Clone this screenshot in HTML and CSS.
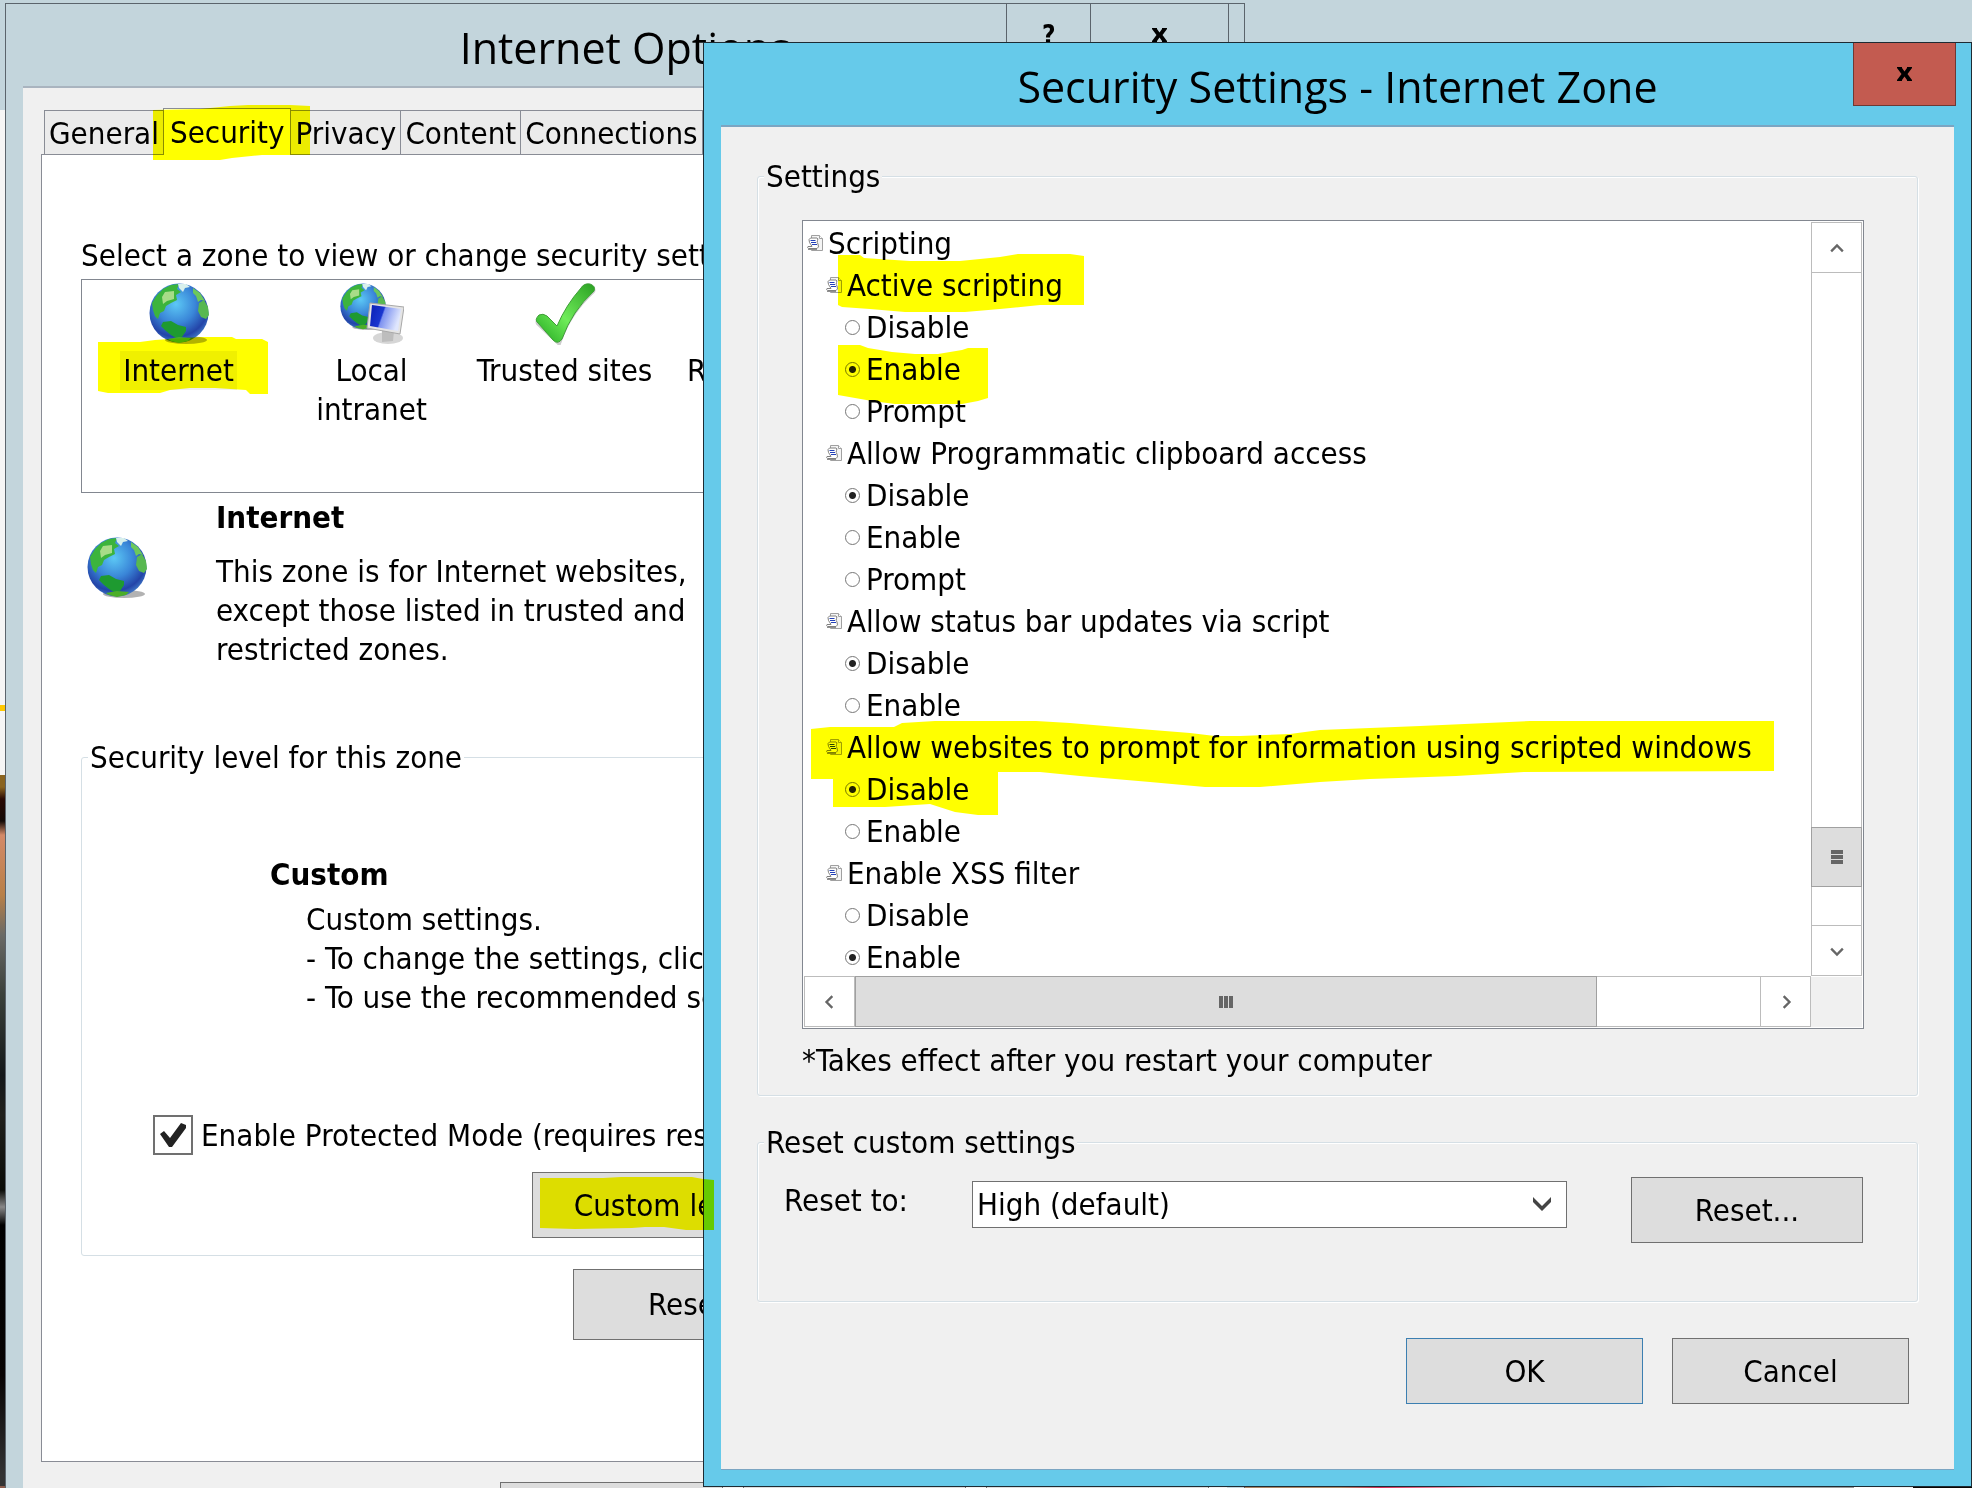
FILE: index.html
```html
<!DOCTYPE html>
<html lang="en">
<head>
    <meta charset="UTF-8">
    <meta name="viewport" content="width=device-width, initial-scale=1.0">
    <title>Internet Options</title>

    <link rel="stylesheet" href="styles.css">
</head>
<body>
    <!-- shared icons -->
    <svg class="defs" aria-hidden="true">
        <defs>
            <radialGradient id="ocean" cx="0.45" cy="0.35" r="0.65">
                <stop offset="0" stop-color="#5cc8f5"/>
                <stop offset="0.5" stop-color="#3a86d8"/>
                <stop offset="0.85" stop-color="#2344a8"/>
                <stop offset="1" stop-color="#3d74c4"/>
            </radialGradient>
            <linearGradient id="screen" x1="0" x2="1" y1="0" y2="0.3">
                <stop offset="0" stop-color="#0a1fb4"/>
                <stop offset="0.45" stop-color="#1a36d0"/>
                <stop offset="0.5" stop-color="#7d92f0"/>
                <stop offset="1" stop-color="#dfe6fd"/>
            </linearGradient>
            <linearGradient id="tick" x1="0" x2="1" y1="1" y2="0">
                <stop offset="0" stop-color="#1fa51c"/>
                <stop offset="0.45" stop-color="#6fec5a"/>
                <stop offset="1" stop-color="#2aa022"/>
            </linearGradient>
            <symbol id="globe" viewBox="0 0 60 62">
                <ellipse cx="37" cy="57" rx="21" ry="4" fill="#000" opacity="0.3"/>
                <circle cx="30" cy="30" r="29.5" fill="url(#ocean)"/>
                <path d="M14 6 L22 2 L30 1 L28 6 L32 9 L27 12 L28 17 L22 20 L17 23 L15 28 L11 30 L9 36 L6 33 L4 27 L3 20 L8 12 Z" fill="#3cb43c"/>
                <path d="M16 9 L25 8 L25 16 L18 18 L14 21 L13 14 Z" fill="#a8dc88"/>
                <path d="M29 1 L37 1 L41 4 L36 5 L34 9 L30 5 Z" fill="#d8f0ec"/>
                <path d="M44 5 L51 10 L56 18 L52 17 L49 19 L47 13 L44 10 Z" fill="#6cc85c"/>
                <path d="M50 20 L55 17 L59 24 L60 32 L57 36 L52 34 L49 28 Z" fill="#58b850"/>
                <path d="M14 39 L22 38 L29 42 L37 44 L37 48 L33 54 L27 55 L22 52 L17 48 L12 43 Z" fill="#1e9a30"/>
                <path d="M19 56 L30 54 L42 55 L39 58 L30 60 L22 58 Z" fill="#4cae28"/>
            </symbol>
            <symbol id="script" viewBox="0 0 16 16">
                <path d="M4.5 0.5 H12.5 L15.5 3.5 V15.5 H4.5 Z" fill="#f4f4f4" stroke="#a0a0a0"/>
                <path d="M12.5 0.5 V3.5 H15.5" fill="#fff" stroke="#a0a0a0"/>
                <path d="M3.5 3 H10 Q11.5 3.5 10.5 5.500 Q9.500 7.500 11 9 Q12.500 12.500 10 13.500 H1.500 Q0 13 1 11.500 H5 Q3.500 9 2.500 7.500 Q1 4 3.500 3 Z" fill="#fff" stroke="#808080"/>
                <path d="M3.5 5.500 H8.500 M4 7.500 H9 M5 9.500 H10" stroke="#2440b8"/>
                <path d="M1 14.500 H10" stroke="#909090"/>
            </symbol>
            <symbol id="glyph-x" viewBox="0 0 17 14">
                <path d="M1 0 H6 V1 L8.500 4.500 L11 1 V0 H16 V1 L11.500 7 L16 13 V14 H11 V13 L8.500 9.500 L6 13 V14 H1 V13 L5.500 7 L1 1 Z"/>
            </symbol>
            <symbol id="chevron" viewBox="0 0 12 12">
                <path d="M1 4 L6 9 L11 4" fill="none" stroke="#666" stroke-width="2"/>
            </symbol>
        </defs>
    </svg>

    <div class="desktop">
        <section class="window options">
            <header class="titlebar">
                <h1>Internet Options</h1>
                <div class="window-buttons">
                    <button class="help" type="button">?</button>
                    <button class="close" type="button" aria-label="Close"><svg width="17" height="14"><use href="#glyph-x"/></svg></button>
                </div>
            </header>
            <div class="client">
                <nav class="tabs">
                    <button type="button">General</button>
                    <button type="button" class="active">Security</button>
                    <button type="button">Privacy</button>
                    <button type="button">Content</button>
                    <button type="button">Connections</button>
                    <button type="button">Programs</button>
                </nav>
                <div class="panel">
                    <p>Select a zone to view or change security settings.</p>
                    <ul class="zones">
                        <li class="selected">
                            <svg width="60" height="62"><use href="#globe"/></svg>
                            <span>Internet</span>
                        </li>
                        <li>
                            <svg width="64" height="62" viewBox="0 0 64 62">
                                <use href="#globe" width="46" height="48"/>
                                <ellipse cx="48" cy="55" rx="15" ry="6" fill="#d6d6d6"/>
                                <path d="M42 46 L54 48 L53 58 L42 59 Z" fill="#bdbdbd"/>
                                <path d="M30 20 L64 24 L60 51 L27 45 Z" fill="#e4e4e4" stroke="#a8a8a8"/>
                                <path d="M32 22 L61 26 L58 48 L30 43 Z" fill="url(#screen)"/>
                            </svg>
                            <span>Local intranet</span>
                        </li>
                        <li>
                            <svg width="62" height="62" viewBox="0 0 62 62">
                                <path d="M6 39 L24 56 Q34 28 57 7" fill="none" stroke="#000" stroke-opacity="0.2" stroke-width="9" stroke-linecap="round"/>
                                <path d="M5 32 Q0 37 4 40 L19 57 Q24 62 28 56 Q38 28 60 8 Q62 3 56 1 Q50 0 47 5 Q32 22 23 43 L13 33 Q9 30 5 32 Z" fill="url(#tick)" stroke="#3f9e38"/>
                            </svg>
                            <span>Trusted sites</span>
                        </li>
                        <li>
                            <svg width="62" height="62" viewBox="0 0 62 62">
                                <circle cx="31" cy="31" r="25" fill="none" stroke="#d22b2b" stroke-width="9"/>
                                <path d="M14 14 L48 48" stroke="#d22b2b" stroke-width="9"/>
                            </svg>
                            <span>Restricted sites</span>
                        </li>
                    </ul>
                    <div class="zone-info">
                        <svg width="60" height="62"><use href="#globe"/></svg>
                        <div>
                            <h2>Internet</h2>
                            <p>This zone is for Internet websites, except those listed in trusted and restricted zones.</p>
                        </div>
                    </div>
                    <fieldset class="level">
                        <legend>Security level for this zone</legend>
                        <div class="level-body">
                            <h2>Custom</h2>
                            <ul class="hints">
                                <li>Custom settings.</li>
                                <li>- To change the settings, click Custom level.</li>
                                <li>- To use the recommended settings, click Default level.</li>
                            </ul>
                            <label class="check">
                                <input type="checkbox" checked>
                                <svg width="30" height="30" viewBox="0 0 30 30"><path d="M2 14 L6 11 L12 18 L23 3 L28 5 L28 8 L14 27 L11 27 Z" fill="#222"/></svg>
                                Enable Protected Mode (requires restarting Internet Explorer)
                            </label>
                            <div class="level-buttons">
                                <button type="button">Custom level...</button>
                                <button type="button">Default level</button>
                            </div>
                        </div>
                    </fieldset>
                    <div class="reset-all">
                        <button type="button">Reset all zones to default level</button>
                    </div>
                </div>
                <div class="options-actions">
                    <button type="button" aria-label="OK"></button>
                    <button type="button" aria-label="Cancel"></button>
                    <button type="button" aria-label="Apply"></button>
                </div>
            </div>
        </section>

        <section class="window settings">
            <header class="titlebar">
                <h1>Security Settings - Internet Zone</h1>
                <div class="window-buttons">
                    <button class="close" type="button" aria-label="Close"><svg width="17" height="14"><use href="#glyph-x"/></svg></button>
                </div>
            </header>
            <div class="client">
                <fieldset>
                    <legend>Settings</legend>
                    <div class="settings-body">
                        <div class="listbox">
                            <ul class="tree">
                                <li class="root"><svg width="16" height="16"><use href="#script"/></svg>Scripting</li>
                                <li class="item"><svg width="16" height="16"><use href="#script"/></svg>Active scripting</li>
                                <li class="choice"><label><input type="radio" name="active">Disable</label></li>
                                <li class="choice"><label><input type="radio" name="active" checked>Enable</label></li>
                                <li class="choice"><label><input type="radio" name="active">Prompt</label></li>
                                <li class="item"><svg width="16" height="16"><use href="#script"/></svg>Allow Programmatic clipboard access</li>
                                <li class="choice"><label><input type="radio" name="clipboard" checked>Disable</label></li>
                                <li class="choice"><label><input type="radio" name="clipboard">Enable</label></li>
                                <li class="choice"><label><input type="radio" name="clipboard">Prompt</label></li>
                                <li class="item"><svg width="16" height="16"><use href="#script"/></svg>Allow status bar updates via script</li>
                                <li class="choice"><label><input type="radio" name="statusbar" checked>Disable</label></li>
                                <li class="choice"><label><input type="radio" name="statusbar">Enable</label></li>
                                <li class="item"><svg width="16" height="16"><use href="#script"/></svg>Allow websites to prompt for information using scripted windows</li>
                                <li class="choice"><label><input type="radio" name="prompt" checked>Disable</label></li>
                                <li class="choice"><label><input type="radio" name="prompt">Enable</label></li>
                                <li class="item"><svg width="16" height="16"><use href="#script"/></svg>Enable XSS filter</li>
                                <li class="choice"><label><input type="radio" name="xss">Disable</label></li>
                                <li class="choice"><label><input type="radio" name="xss" checked>Enable</label></li>
                            </ul>
                            <div class="scroll vertical">
                                <button type="button" aria-label="Scroll up"><svg class="up" width="14" height="14"><use href="#chevron"/></svg></button>
                                <div class="track"></div>
                                <div class="thumb"><i></i><i></i><i></i></div>
                                <div class="track-end"></div>
                                <button type="button" aria-label="Scroll down"><svg width="14" height="14"><use href="#chevron"/></svg></button>
                            </div>
                            <div class="scroll horizontal">
                                <button type="button" aria-label="Scroll left"><svg class="left" width="14" height="14"><use href="#chevron"/></svg></button>
                                <div class="thumb"><i></i><i></i><i></i></div>
                                <div class="track"></div>
                                <button type="button" aria-label="Scroll right"><svg class="right" width="14" height="14"><use href="#chevron"/></svg></button>
                            </div>
                            <div class="corner"></div>
                        </div>
                        <p class="note">*Takes effect after you restart your computer</p>
                    </div>
                </fieldset>
                <fieldset>
                    <legend>Reset custom settings</legend>
                    <div class="reset-body">
                        <label for="reset-to">Reset to:</label>
                        <div class="select">
                            <select id="reset-to">
                                <option>High (default)</option>
                                <option>Medium-high</option>
                                <option>Medium</option>
                            </select>
                            <svg width="18" height="14" viewBox="0 0 18 14"><path d="M0 0 L9 9 L18 0 V5 L9 14 L0 5 Z" fill="#444"/></svg>
                        </div>
                        <button type="button">Reset...</button>
                    </div>
                </fieldset>
                <div class="actions">
                    <button type="button" class="default">OK</button>
                    <button type="button">Cancel</button>
                </div>
            </div>
        </section>

        <!-- marker pen strokes, drawn over both windows -->
        <svg class="marker" aria-hidden="true" width="1972" height="1488">
            <path d="M153 110 L200 109 L230 106 L248 105 H290 L310 106 V155 H262 L232 158 L220 160 H153 Z"/>
            <path d="M98 342 H140 L155 340 L200 337 H232 L236 339 H262 L268 342 V394 H250 L246 390 L215 388 H190 L170 390 L160 393 H108 L98 391 Z"/>
            <path d="M540 1178 H603 L621 1177 H692 L703 1179 L714 1180 V1230 H686 L664 1227 H645 L632 1228 L575 1229 L540 1228 Z"/>
            <path d="M838 255 H860 L864 258 L910 261 H960 L1000 257 L1018 254 H1070 L1084 256 V305 H1040 L1000 309 L965 312 H905 L870 309 L842 307 L838 305 Z"/>
            <path d="M838 345 H860 L868 348 L892 352 L915 354 H938 L962 350 L968 348 H988 V398 L978 401 L962 404 H895 L872 401 L838 395 Z"/>
            <path d="M811 729 L830 727 H894 L902 723 L935 721 H1036 L1070 723 L1140 729 L1190 733 L1215 736 H1240 L1290 734 L1320 730 L1420 726 L1530 721 H1774 V771 L1524 772 L1456 776 L1370 779 L1320 782 L1260 787 H1205 L1150 782 L1080 776 L1040 772 H998 V815 H978 L955 812 L930 804 L915 805 L885 807 H833 V779 H811 Z"/>
        </svg>
    </div>
</body>
</html>
```
FILE: styles.css
```css
* {
    box-sizing: border-box;
}

body {
    margin: 0;
    font-family: "DejaVu Sans Condensed", "Noto Sans", sans-serif;
    font-size: 31px;
    line-height: 39px;
    color: #000;
}

h1, h2, p, ul {
    margin: 0;
    padding: 0;
    font-size: inherit;
}

ul {
    list-style: none;
}

svg {
    display: block;
    flex-shrink: 0;
}

.defs {
    position: absolute;
    width: 0;
    height: 0;
}

button {
    padding: 0;
    font: inherit;
    color: inherit;
    white-space: nowrap;
    background: #ddd;
    border: 1px solid #707070;
    border-radius: 0;
}

.desktop {
    position: relative;
    height: 100vh;
    overflow: hidden;
    background:
        linear-gradient(90deg, #8a5a4a 0, #b08a68 68%, #d6305a 70%, #f0a0b0 74%, #dde0ea 76%, #a8b4d0 83%, #eee 85%, #a8a8a8 90%, #999 94%, #fff 94%, #f0f0f0 97%, #0a0604 97%) right bottom / 100% 2px no-repeat,
        linear-gradient(#8a6420 0, #8a6420 12px, #2a0a04 24px, #140a06 46px, #d48a68 60px, #b88048 120px, #6a6a66 160px, #3a403a 220px, #14181a 300px, #20201c 340px, #0a0c08 415px, #888 432px, #000 450px, #080404 600px, #333 700px) 0 775px / 6px 100% no-repeat,
        linear-gradient(#ffc800, #ffc800) 0 705px / 6px 6px no-repeat,
        linear-gradient(#c3d5dc, #c3d5dc) 0 0 / 100% 110px no-repeat,
        #f5f5f5;
}

/* windows */
.window {
    position: absolute;
    border: 1px solid #5b646c;
}

.options {
    top: 3px;
    left: 5px;
    width: 62.9%;
    background: #c3d5dc;
}

.settings {
    top: 42px;
    left: 703px;
    right: 0;
    background: #66caea;
    border-color: #1d2b33;
}

.titlebar {
    display: grid;
    grid-template-columns: 1fr auto 1fr;
    height: 84px;
    padding: 0 15px;
}

.titlebar h1 {
    grid-column: 2;
    font-family: "Open Sans", sans-serif;
    font-size: 43px;
    font-weight: 400;
    line-height: 87px;
}

.window-buttons {
    display: flex;
    justify-self: end;
    height: 63px;
}

.window-buttons button {
    display: flex;
    align-items: center;
    justify-content: center;
    width: 139px;
    background: none;
    border-color: #5b646c;
    border-width: 0 1px 1px;
}

.window-buttons .help {
    width: 84px;
    border-right: 0;
    font-size: 26px;
    font-weight: bold;
}

.settings .window-buttons .close {
    width: 103px;
    background: #c35b50;
    border-color: #6e3934;
}

.client {
    margin: 0 17px 17px;
    padding: 30px 36px 65px;
    background: #f0f0f0;
    box-shadow: 0 -2px 0 #7ba5c2, 0 1px 0 #7ba5c2;
}

fieldset {
    min-width: 0;
    margin: 0;
    padding: 0 6px;
    border: 1px solid #d5dfe5;
    border-radius: 3px;
    box-shadow: 1px 1px 0 #fff, inset 1px 1px 0 #fff;
}

legend {
    padding: 0 2px;
    background: #f0f0f0;
}

/* Internet Options */
.options .client {
    padding: 20px 18px 60px;
    box-shadow: 0 -2px 0 #a9b4bf;
}

.tabs {
    display: flex;
    align-items: flex-end;
    padding-left: 3px;
}

.tabs button {
    height: 45px;
    margin-bottom: -1px;
    padding: 2px 4px 0;
    background: #ebebeb;
    border-color: #898c95;
    border-right-width: 0;
}

.tabs .active {
    position: relative;
    height: 47px;
    padding: 0 6px;
    background: #fff;
    border-bottom: 0;
    border-right-width: 1px;
}

.tabs .active + button {
    border-left: 0;
}

.panel {
    padding: 81px 39px 121px;
    background: #fff;
    border: 1px solid #898c95;
}

.zones {
    display: flex;
    height: 214px;
    margin-top: 4px;
    padding-top: 3px;
    border: 1px solid #828790;
}

.zones li {
    display: flex;
    flex-direction: column;
    align-items: center;
    gap: 6px;
    width: 193px;
    text-align: center;
}

.zones span {
    max-width: 190px;
    padding: 0 3px;
}

.zones li:nth-child(even) span {
    max-width: 150px;
}

.zones .selected span {
    background: #f0f0f0;
}

.zone-info {
    display: flex;
    gap: 69px;
    margin-top: 5px;
    padding-left: 6px;
}

.zone-info svg {
    margin-top: 39px;
}

.zone-info p {
    max-width: 500px;
    margin-top: 15px;
}

.level {
    margin-top: 69px;
}

.level legend {
    background: #fff;
}

.level-body {
    padding: 78px 0 17px 65px;
}

.level-body h2 {
    padding-left: 117px;
}

.hints {
    margin-top: 6px;
    padding-left: 153px;
    white-space: nowrap;
}

.check {
    display: flex;
    align-items: center;
    gap: 8px;
    position: relative;
    margin-top: 98px;
    white-space: nowrap;
}

.check input {
    appearance: none;
    width: 40px;
    height: 40px;
    margin: 0;
    background: #fff;
    border: 2px solid #707070;
}

.check svg {
    position: absolute;
    left: 5px;
    top: 5px;
}

.level-buttons {
    display: flex;
    gap: 20px;
    margin-top: 17px;
    padding-left: 379px;
}

.level-buttons button {
    width: 292px;
    height: 66px;
}

.reset-all {
    display: flex;
    margin-top: 13px;
    padding: 0 18px 0 492px;
}

.reset-all button {
    flex: 1;
    height: 71px;
}

.options-actions {
    display: flex;
    justify-content: flex-end;
    gap: 20px;
    margin-top: 20px;
}

.options-actions button {
    width: 223px;
    height: 66px;
}

/* Security Settings */
.settings-body {
    padding: 24px 47px 15px 38px;
}

.listbox {
    display: grid;
    grid-template-columns: 1fr 51px;
    grid-template-rows: auto 50px;
    padding: 0 1px 1px;
    background: #fff;
    border: 1px solid #828790;
}

.tree li {
    display: flex;
    align-items: center;
    height: 42px;
    padding-top: 2px;
    padding-left: 22px;
    white-space: nowrap;
}

.tree svg {
    margin-right: 5px;
}

.tree .root {
    padding-left: 3px;
}

.tree .choice {
    padding-left: 41px;
}

.choice label {
    display: flex;
    align-items: center;
    gap: 6px;
}

.choice input {
    appearance: none;
    width: 15px;
    height: 15px;
    margin: 0;
    border: 1px solid #777;
    border-radius: 50%;
}

.choice input:checked {
    background: radial-gradient(circle, #222 3px, transparent 4px);
}

.scroll {
    display: flex;
    background: #fff;
}

.scroll button {
    display: flex;
    align-items: center;
    justify-content: center;
    width: 51px;
    height: 51px;
    background: #fff;
    border-color: #bcbcbc;
}

.scroll .thumb {
    display: flex;
    align-items: center;
    justify-content: center;
    gap: 1px;
    background: #ddd;
    border: 1px solid #a0a0a0;
}

.vertical {
    flex-direction: column;
    padding: 1px 0;
}

.vertical .up {
    margin-top: 3px;
}

.vertical .track,
.vertical .track-end {
    flex: 1;
    border: solid #bcbcbc;
    border-width: 0 1px;
}

.vertical .track-end {
    flex: none;
    height: 38px;
}

.vertical .thumb {
    flex-direction: column;
    height: 60px;
}

.vertical i {
    width: 12px;
    height: 4px;
    background: #666;
}

.horizontal {
    margin-top: -1px;
}

.horizontal .thumb {
    flex: 742;
}

.horizontal .track {
    flex: 164;
    border: solid #bcbcbc;
    border-width: 1px 0;
}

.horizontal i {
    width: 4px;
    height: 12px;
    background: #666;
}

.up {
    transform: rotate(180deg);
}

.left {
    transform: rotate(90deg);
}

.right {
    transform: rotate(-90deg);
}

.corner {
    background: #f0f0f0;
}

.note {
    margin-top: 12px;
}

fieldset + fieldset {
    margin-top: 27px;
}

.reset-body {
    display: flex;
    align-items: flex-start;
    padding: 15px 48px 58px 20px;
}

.reset-body label {
    width: 188px;
    margin-top: 4px;
}

.reset-body button {
    width: 232px;
    height: 66px;
    margin-left: 64px;
}

.select {
    flex: 1;
    position: relative;
    margin-top: 4px;
}

.select select {
    appearance: none;
    display: block;
    width: 100%;
    height: 47px;
    padding: 0 4px;
    font: inherit;
    color: inherit;
    background: #fff;
    border: 1px solid #707070;
    border-radius: 0;
}

.select svg {
    position: absolute;
    right: 16px;
    top: 16px;
    pointer-events: none;
}

.actions {
    display: flex;
    justify-content: flex-end;
    gap: 29px;
    margin-top: 36px;
    padding-right: 9px;
}

.actions button {
    width: 237px;
    height: 66px;
}

.actions .default {
    border-color: #3c7fb1;
}

.marker {
    position: absolute;
    left: 0;
    top: 0;
    fill: #ff0;
    mix-blend-mode: multiply;
    pointer-events: none;
}
```
